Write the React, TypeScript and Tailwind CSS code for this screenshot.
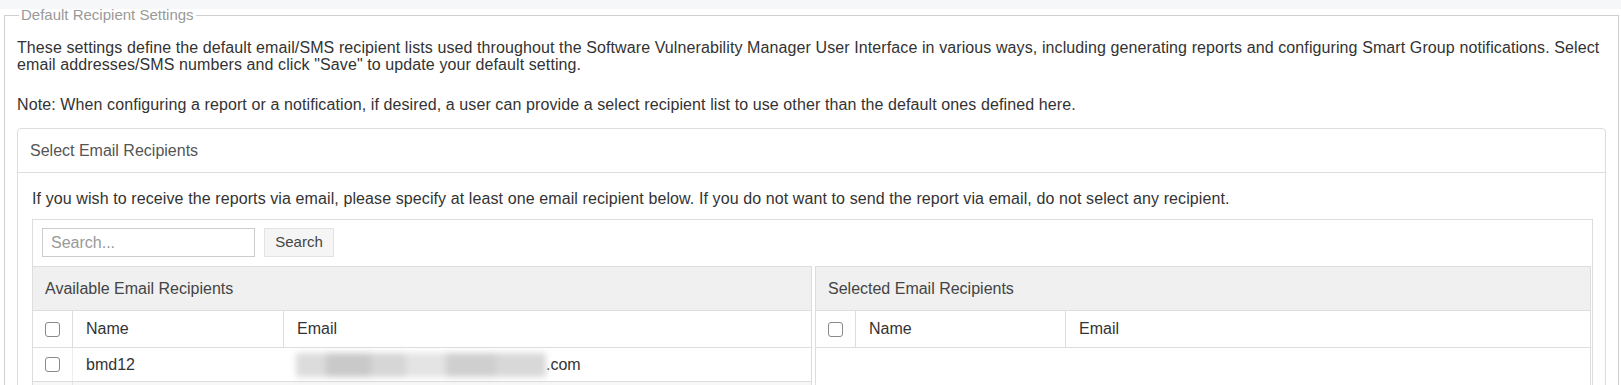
function Check() {
  return <span className="inline-block h-[15px] w-[15px] rounded-[3px] border border-[#8a8a8a] bg-white" />;
}

function HeadRow({ cols }: { cols: string }) {
  return (
    <div className={`grid ${cols} h-[37px] items-center border-b border-[#ddd] bg-white text-[16px] text-[#333]`}>
      <div className="flex h-full items-center justify-center border-r border-[#ddd] pr-[1px]">
        <Check />
      </div>
      <div className="flex h-full items-center border-r border-[#ddd] pl-[13px]">Name</div>
      <div className="pl-[13px]">Email</div>
    </div>
  );
}

export default function App() {
  return (
    <div className="min-h-screen w-full bg-white font-['Liberation_Sans',Arial,sans-serif] text-[16px] text-[#333]">
      <div className="h-[9px] bg-[#f6f7f9]" />
      <fieldset className="ml-[4px] mr-[2px] border border-[#cfcfcf] px-[12px]">
        <legend className="ml-[2px] px-[2px] text-[15px] leading-[12px] text-[#999]">Default Recipient Settings</legend>

        <p className="mt-[18px] leading-[17px] tracking-[0.1px]">
          These settings define the default email/SMS recipient lists used throughout the Software Vulnerability Manager User
          Interface in various ways, including generating reports and configuring Smart Group notifications. Select email
          addresses/SMS numbers and click "Save" to update your default setting.
        </p>
        <p className="mt-[23px] leading-[17px] tracking-[0.1px]">
          Note: When configuring a report or a notification, if desired, a user can provide a select recipient list to use other
          than the default ones defined here.
        </p>

        <div className="mt-[15px] rounded-[4px] border border-[#ddd]">
          <div className="border-b border-[#ddd] px-[12px] py-[11px] text-[16px] leading-[21px] text-[#555]">
            Select Email Recipients
          </div>
          <div className="pl-[14px] pr-[12px] pt-[16px]">
            <p className="leading-[20px] tracking-[0.1px]">
              If you wish to receive the reports via email, please specify at least one email recipient below. If you do not want
              to send the report via email, do not select any recipient.
            </p>
            <div className="mt-[10px] border border-[#ddd]">
              <div className="flex gap-[9px] px-[9px] pb-[9px] pt-[8px]">
                <input
                  placeholder="Search..."
                  className="h-[29px] w-[213px] border border-[#ccc] px-[8px] text-[16px] text-[#333] placeholder:text-[#999] outline-none"
                />
                <button className="h-[29px] w-[70px] border border-[#e3e3e3] bg-[#f5f5f5] text-[15px] text-[#444]">Search</button>
              </div>
              <div className="grid grid-cols-[779px_1fr] gap-[3px]">
                <div className="border-r border-[#ddd]">
                  <div className="h-[45px] border-y border-[#ddd] bg-[#f0f0f0] pl-[12px] text-[16px] leading-[43px] text-[#444]">
                    Available Email Recipients
                  </div>
                  <HeadRow cols="grid-cols-[40px_211px_1fr]" />
                  <div className="grid h-[34px] grid-cols-[40px_211px_1fr] items-center border-b border-[#ddd] text-[16px]">
                    <div className="flex h-full items-center justify-center border-r border-[#eee] pr-[1px]">
                      <Check />
                    </div>
                    <div className="pl-[13px]">bmd12</div>
                    <div className="flex items-center pl-[12px]">
                      <span className="flex h-[24px] w-[250px] blur-[3px]">
                        <span className="w-[30px] bg-[#dcdcdc]" />
                        <span className="w-[45px] bg-[#c9c9c9]" />
                        <span className="w-[35px] bg-[#d6d6d6]" />
                        <span className="w-[40px] bg-[#e4e4e4]" />
                        <span className="w-[50px] bg-[#cfcfcf]" />
                        <span className="w-[50px] bg-[#d8d8d8]" />
                      </span>
                      <span>.com</span>
                    </div>
                  </div>
                  <div className="grid h-[20px] grid-cols-[40px_211px_1fr] bg-[#f7f7f7]">
                    <div className="border-r border-[#e5e5e5]" />
                  </div>
                </div>
                <div className="mr-[1px] border-x border-[#ddd] bg-white">
                  <div className="h-[45px] border-y border-[#ddd] bg-[#f0f0f0] pl-[12px] text-[16px] leading-[43px] text-[#444]">
                    Selected Email Recipients
                  </div>
                  <HeadRow cols="grid-cols-[40px_210px_1fr]" />
                  <div className="h-[60px]" />
                </div>
              </div>
            </div>
          </div>
        </div>
      </fieldset>
    </div>
  );
}
